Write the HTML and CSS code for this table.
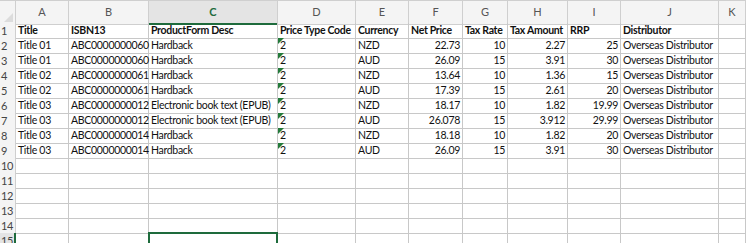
FILE: index.html
```html
<!DOCTYPE html>
<html>

<head>
    <title>Prices</title>
    <link rel="stylesheet" href="styles.css">
</head>

<body>
    <div class="sheet">
        <div class="row head">
            <div class="corner"></div>
            <div>A</div><div>B</div><div class="sel">C</div><div>D</div><div>E</div>
            <div>F</div><div>G</div><div>H</div><div>I</div><div>J</div><div>K</div>
        </div>
        <div class="row bold">
            <div class="num">1</div>
            <div>Title</div><div>ISBN13</div><div>ProductForm Desc</div><div>Price Type Code</div><div>Currency</div>
            <div>Net Price</div><div>Tax Rate</div><div>Tax Amount</div><div>RRP</div><div>Distributor</div><div></div>
        </div>
        <div class="row">
            <div class="num">2</div>
            <div>Title 01</div><div>ABC0000000060</div><div>Hardback</div><div class="flag">2</div><div>NZD</div>
            <div class="r">22.73</div><div class="r">10</div><div class="r">2.27</div><div class="r">25</div><div>Overseas Distributor</div><div></div>
        </div>
        <div class="row">
            <div class="num">3</div>
            <div>Title 01</div><div>ABC0000000060</div><div>Hardback</div><div class="flag">2</div><div>AUD</div>
            <div class="r">26.09</div><div class="r">15</div><div class="r">3.91</div><div class="r">30</div><div>Overseas Distributor</div><div></div>
        </div>
        <div class="row">
            <div class="num">4</div>
            <div>Title 02</div><div>ABC0000000061</div><div>Hardback</div><div class="flag">2</div><div>NZD</div>
            <div class="r">13.64</div><div class="r">10</div><div class="r">1.36</div><div class="r">15</div><div>Overseas Distributor</div><div></div>
        </div>
        <div class="row">
            <div class="num">5</div>
            <div>Title 02</div><div>ABC0000000061</div><div>Hardback</div><div class="flag">2</div><div>AUD</div>
            <div class="r">17.39</div><div class="r">15</div><div class="r">2.61</div><div class="r">20</div><div>Overseas Distributor</div><div></div>
        </div>
        <div class="row">
            <div class="num">6</div>
            <div>Title 03</div><div>ABC0000000012</div><div>Electronic book text (EPUB)</div><div class="flag">2</div><div>NZD</div>
            <div class="r">18.17</div><div class="r">10</div><div class="r">1.82</div><div class="r">19.99</div><div>Overseas Distributor</div><div></div>
        </div>
        <div class="row">
            <div class="num">7</div>
            <div>Title 03</div><div>ABC0000000012</div><div>Electronic book text (EPUB)</div><div class="flag">2</div><div>AUD</div>
            <div class="r">26.078</div><div class="r">15</div><div class="r">3.912</div><div class="r">29.99</div><div>Overseas Distributor</div><div></div>
        </div>
        <div class="row">
            <div class="num">8</div>
            <div>Title 03</div><div>ABC0000000014</div><div>Hardback</div><div class="flag">2</div><div>NZD</div>
            <div class="r">18.18</div><div class="r">10</div><div class="r">1.82</div><div class="r">20</div><div>Overseas Distributor</div><div></div>
        </div>
        <div class="row">
            <div class="num">9</div>
            <div>Title 03</div><div>ABC0000000014</div><div>Hardback</div><div class="flag">2</div><div>AUD</div>
            <div class="r">26.09</div><div class="r">15</div><div class="r">3.91</div><div class="r">30</div><div>Overseas Distributor</div><div></div>
        </div>
        <div class="row">
            <div class="num">10</div>
            <div></div><div></div><div></div><div></div><div></div><div></div><div></div><div></div><div></div><div></div><div></div>
        </div>
        <div class="row">
            <div class="num">11</div>
            <div></div><div></div><div></div><div></div><div></div><div></div><div></div><div></div><div></div><div></div><div></div>
        </div>
        <div class="row">
            <div class="num">12</div>
            <div></div><div></div><div></div><div></div><div></div><div></div><div></div><div></div><div></div><div></div><div></div>
        </div>
        <div class="row">
            <div class="num">13</div>
            <div></div><div></div><div></div><div></div><div></div><div></div><div></div><div></div><div></div><div></div><div></div>
        </div>
        <div class="row">
            <div class="num">14</div>
            <div></div><div></div><div></div><div></div><div></div><div></div><div></div><div></div><div></div><div></div><div></div>
        </div>
        <div class="row">
            <div class="num sel-row">15</div>
            <div></div><div></div><div class="active"></div><div></div><div></div><div></div><div></div><div></div><div></div><div></div><div></div>
        </div>
    </div>
</body>

</html>
```

FILE: styles.css
```css
body {
    margin: 0;
    background: #fff;
    font-family: Lato, "Liberation Sans", sans-serif;
    font-size: 10.5px;
    letter-spacing: -0.3px;
    color: #111;
    overflow: hidden;
}

.sheet {
    border-top: 1px solid #cfcfcf;
}

.row {
    display: grid;
    grid-template-columns: 16px 53px 80px 129px 78px 53px 54px 45px 60px 53px 98px 1fr;
    height: 15px;
}

.row > div {
    box-sizing: border-box;
    border-right: 1px solid #c8c8c8;
    border-bottom: 1px solid #c8c8c8;
    padding: 0 2px;
    line-height: 15px;
    white-space: nowrap;
    overflow: visible;
    position: relative;
}

.row .r {
    text-align: right;
}

.bold > div {
    font-weight: bold;
}

/* column letters */
.head {
    height: 22px;
}

.head > div {
    background: #f4f4f4;
    color: #555;
    text-align: center;
    line-height: 22px;
    font-size: 11px;
    font-weight: normal;
    letter-spacing: 0;
    border-color: #cfcfcf;
}

.head .sel {
    background: #e4e4e4;
    color: #1e6b3c;
    font-weight: bold;
    border-bottom: 2px solid #1e6b3c;
}

.head .corner {
    padding: 0;
}

.head .corner::after {
    content: "";
    position: absolute;
    right: 2px;
    bottom: 2px;
    border-left: 9px solid transparent;
    border-bottom: 9px solid #dcdcdc;
}

/* row numbers */
.row .num {
    background: #f4f4f4;
    color: #444;
    padding: 0 0 0 1px;
    font-size: 11px;
    letter-spacing: -0.4px;
    font-weight: normal;
    border-color: #cfcfcf;
}

.row .sel-row {
    border-right: 2px solid #1e6b3c;
    background: #e4e4e4;
}

/* number stored as text marker */
.flag::before {
    content: "";
    position: absolute;
    left: 0;
    top: 0;
    border-top: 6px solid #237a3a;
    border-right: 6px solid transparent;
}

.row .active {
    border: 2px solid #1e6b3c;
    border-bottom: none;
    margin-left: -1px;
    margin-top: -1px;
    width: calc(100% + 1px);
    height: 16px;
}
```
